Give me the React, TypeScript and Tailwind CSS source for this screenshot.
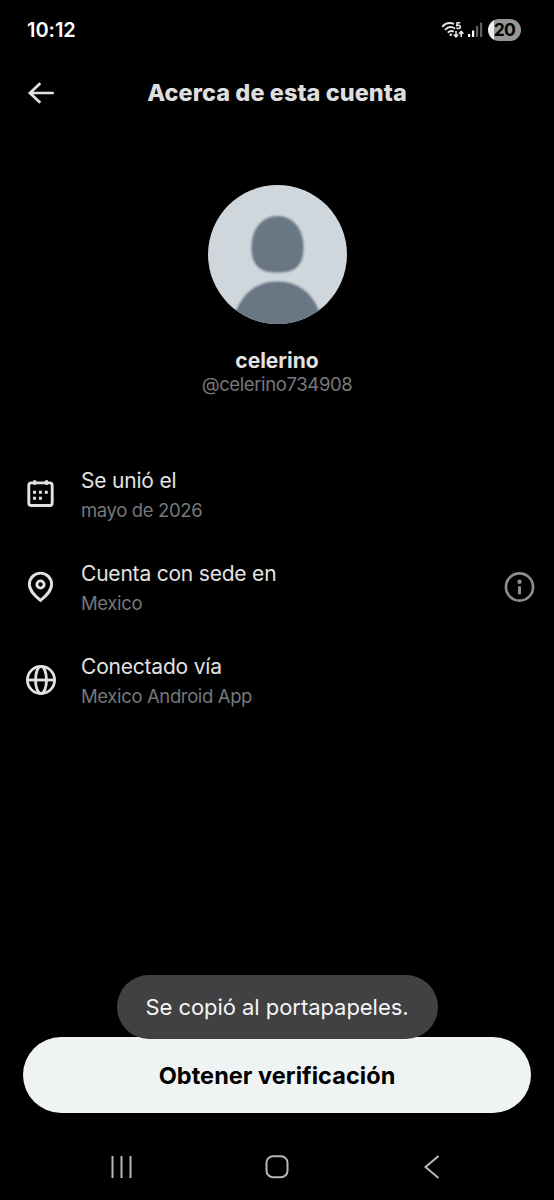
import React from "react";

function StatusBar() {
  return (
    <div className="flex h-[60px] items-center justify-between pl-[27px] pr-[33px]">
      <span className="text-[20px] font-semibold leading-6 tracking-[-0.05px] text-white">10:12</span>
      <div className="flex items-center">
        <svg width="24" height="20" viewBox="0 0 24 20" fill="none" stroke="#e8e8e8" strokeWidth="1.9">
          <path d="M1.2 6.8C4.200 3.200 9 2.300 13 3.800" />
          <path d="M4 9.8c3-3 6.800-3.400 10-1.300" />
          <path d="M6.800 12.600c1.900-1.800 4.200-2 6-.8" />
          <circle cx="9.800" cy="14.700" r="1.300" fill="#e8e8e8" stroke="none" />
          <path d="M19.300 2.700h-3.200l-.3 2.900c2-.7 3.600-.1 3.600 1.300 0 1.600-2.200 2-3.900 1.100" strokeWidth="1.600" />
          <path d="M15 11v5.500M12.800 14.500l2.200 2.300 2.200-2.300M20.200 17v-5.500M18 13.700l2.200-2.300 2.200 2.300" strokeWidth="1.600" />
        </svg>
        <svg className="ml-[2px]" width="16" height="18" viewBox="0 0 16 18">
          <path d="M1 13h2.200v3H1z" fill="#fff" />
          <path d="M5 9.500h2.200V16H5z" fill="#fff" />
          <path d="M9 5h2.200v11H9z" fill="#606060" />
          <path d="M13 1.500h2.200V16H13z" fill="#606060" />
        </svg>
        <div className="ml-[5px] flex h-[22px] w-[33px] items-center justify-center rounded-full bg-[linear-gradient(90deg,#ededed_0_6px,#969696_6px)]">
          <span className="text-[17.500px] font-bold leading-[22px] tracking-[-0.6px] text-black">20</span>
        </div>
      </div>
    </div>
  );
}

function CalendarIcon() {
  return (
    <svg width="32" height="32" viewBox="0 0 32 32" fill="none">
      <rect x="3.800" y="4.900" width="23.400" height="22.600" rx="2.500" stroke="#e2e2e2" strokeWidth="2.900" />
      <path d="M9.700 2.200v4.600M21.500 2.200v4.600" stroke="#e2e2e2" strokeWidth="3" />
      <path d="M8 12.800h3v3H8zM13.900 12.800h3v3h-3zM19.800 12.800h3v3h-3zM8 18.700h3v3H8zM13.900 18.700h3v3h-3z" fill="#e2e2e2" />
    </svg>
  );
}

function PinIcon() {
  return (
    <svg width="32" height="32" viewBox="0 0 32 32" fill="none" stroke="#e2e2e2">
      <path d="M15.500 29.300C11 25.500 4.400 20.500 4.400 13.200a11.100 11.100 0 0 1 22.200 0C26.600 20.500 20 25.500 15.500 29.300Z" strokeWidth="2.900" />
      <circle cx="15.500" cy="13.500" r="3.600" strokeWidth="2.900" />
    </svg>
  );
}

function GlobeIcon() {
  return (
    <svg width="32" height="32" viewBox="0 0 32 32" fill="none" stroke="#e2e2e2" strokeWidth="2.800">
      <circle cx="16" cy="16" r="13.600" />
      <ellipse cx="16" cy="16" rx="5.500" ry="13.600" />
      <path d="M2.500 16h27" />
    </svg>
  );
}

function InfoIcon() {
  return (
    <svg width="32" height="32" viewBox="0 0 32 32">
      <circle cx="16.500" cy="16" r="13.600" fill="none" stroke="#8a8d91" strokeWidth="2.600" />
      <circle cx="16.500" cy="10.800" r="2.200" fill="#8a8d91" />
      <path d="M15 15.300h3V23.300h-3z" fill="#8a8d91" />
    </svg>
  );
}

interface RowProps {
  icon: React.ReactNode;
  title: React.ReactNode;
  detail: React.ReactNode;
  action?: React.ReactNode;
}

function InfoRow({ icon, title, detail, action }: RowProps) {
  return (
    <div className="flex h-[93px] items-center pl-[25px] pr-[19px]">
      {icon}
      <div className="ml-[24px] flex-1 whitespace-nowrap pt-[4px]">
        <div className="text-[21px] leading-[30px] tracking-[-0.2px] text-[#e2e2e2]">{title}</div>
        <div className="text-[18.500px] leading-[29px] tracking-[-0.37px] text-[#75787c]">{detail}</div>
      </div>
      {action}
    </div>
  );
}

export default function App() {
  return (
    <div className="flex h-[1200px] w-[554px] flex-col overflow-hidden bg-black font-['Inter',sans-serif]">
      <StatusBar />
      <header className="grid h-[66px] grid-cols-[80px_1fr_80px] items-center">
        <svg className="ml-[27px]" width="28" height="24" viewBox="0 0 28 24" fill="none" stroke="#e2e2e2" strokeWidth="2.700">
          <path d="M13.300 2.200 2.900 12l10.400 9.800M2.900 12h23.900" />
        </svg>
        <h1 className="whitespace-nowrap text-center text-[23.500px] font-extrabold leading-8 tracking-[0.05px] text-[#dedede]">Acerca de esta cuenta</h1>
      </header>

      <section className="flex flex-col items-center pt-[59px]">
        <svg width="139" height="139" viewBox="0 0 139 139">
          <defs>
            <clipPath id="avatar">
              <circle cx="69.500" cy="69.500" r="69.500" />
            </clipPath>
            <filter id="soft">
              <feGaussianBlur stdDeviation="0.8" />
            </filter>
          </defs>
          <g clipPath="url(#avatar)">
            <rect width="139" height="139" fill="#cfd6dc" />
            <g fill="#697683" filter="url(#soft)">
              <path d="M69.500 31C84 31 95.500 43 95.500 62C95.500 81 87 87.500 69.500 87.500S43.500 81 43.500 62C43.500 43 55 31 69.500 31Z" />
              <path d="M69.500 96.500C90 96.500 104 108 111 126V145H28V126C35 108 49 96.500 69.500 96.500Z" />
            </g>
          </g>
        </svg>
        <div className="mt-[24px] text-[21px] font-bold leading-[25px] text-[#e2e2e2]">celerino</div>
        <div className="-mt-px mb-px text-[18.500px] leading-[24px] tracking-[-0.38px] text-[#75787c]">@celerino734908</div>
      </section>

      <section className="mt-[50px]">
        <InfoRow icon={<CalendarIcon />} title="Se unió el" detail="mayo de 2026" />
        <InfoRow icon={<PinIcon />} title="Cuenta con sede en" detail="Mexico" action={<InfoIcon />} />
        <InfoRow icon={<GlobeIcon />} title="Conectado vía" detail="Mexico Android App" />
      </section>

      <footer className="mt-auto">
        <div className="relative mx-[23px]">
          <button className="block h-[76px] w-full rounded-full bg-[#eff3f4] pt-px text-center text-[23.500px] font-bold leading-[75px] tracking-[0.05px] text-black">
            <span>Obtener verificación</span>
          </button>
          <div className="absolute bottom-[74.500px] left-[93.500px] flex h-[63.500px] w-[321px] items-center justify-center whitespace-nowrap rounded-full bg-[#414042] text-[22px] tracking-[-0.05px] text-[#f5f5f5]">
            <span className="pt-px">Se copió al portapapeles.</span>
          </div>
        </div>
        <nav className="flex h-[87px] items-center justify-between pl-[108px] pr-[109px] pt-[20px]">
          <svg width="26" height="26" viewBox="0 0 26 26" stroke="#b8b8b8" strokeWidth="2">
            <path d="M4.500 2v22M13.500 2v22M22.500 2v22" />
          </svg>
          <svg width="26" height="26" viewBox="0 0 26 26" fill="none" stroke="#b8b8b8" strokeWidth="2">
            <rect x="2.500" y="2.200" width="21" height="21" rx="6.500" />
          </svg>
          <svg width="26" height="26" viewBox="0 0 26 26" fill="none" stroke="#b8b8b8" strokeWidth="2">
            <path d="M19.500 2 6.500 13l13 11" />
          </svg>
        </nav>
      </footer>
    </div>
  );
}
